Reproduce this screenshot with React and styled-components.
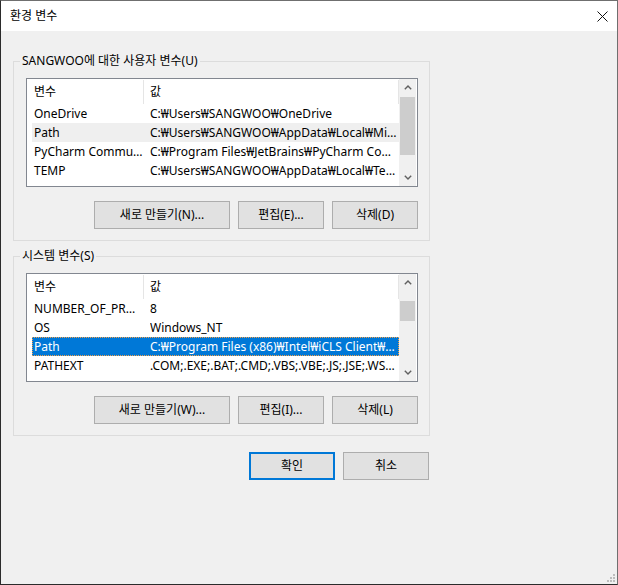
import React from 'react'
import styled, { createGlobalStyle } from 'styled-components'

const Global = createGlobalStyle`
  html, body {
    margin: 0;
    padding: 0;
    background: #f0f0f0;
  }
  body {
    font-family: "Noto Sans", "Noto Sans CJK KR", sans-serif;
    font-size: 12px;
    color: #000;
  }
`;

const Window = styled.div`
  position: relative;
  width: 618px;
  height: 585px;
  box-sizing: border-box;
  border: 1px solid #6f6f6f;
  border-left-color: #2b2b2b;
  border-bottom-color: #2b2b2b;
  background: #f0f0f0;
  display: flex;
  flex-direction: column;
  overflow: hidden;
`;

const TitleBar = styled.div`
  height: 30px;
  background: #fff;
  display: flex;
  align-items: center;
  justify-content: space-between;
  padding: 0 9px 0 9px;
  .title {
    line-height: 16px;
  }
`;

const Body = styled.div`
  padding: 22px 0 0 12px;
  display: flex;
  flex-direction: column;
`;

const Group = styled.fieldset`
  width: 417px;
  box-sizing: border-box;
  min-width: 0;
  margin: ${p => p.$top || 0}px 0 0 0;
  padding: 0;
  border: 1px solid #dcdcdc;
  legend {
    margin-left: 6px;
    padding: 0 2px;
    line-height: 16px;
    font-size: 12px;
  }
`;

const GroupInner = styled.div`
  padding: 9px 11px 11px 12px;
`;

const ListBox = styled.div`
  height: 109px;
  box-sizing: border-box;
  border: 1px solid #828790;
  background: #fff;
  display: flex;
  overflow: hidden;
`;

const ListMain = styled.div`
  width: 372px;
  padding-left: 5px;
  box-sizing: border-box;
  display: flex;
  flex-direction: column;
  overflow: hidden;
`;

const Header = styled.div`
  height: 25px;
  display: flex;
  flex-shrink: 0;
`;

const HeaderCell = styled.div`
  width: ${p => p.$w}px;
  box-sizing: border-box;
  padding-left: ${p => p.$pad}px;
  margin-top: 1px;
  border-right: 1px solid #e5e5e5;
  display: flex;
  align-items: center;
  line-height: 16px;
`;

const Row = styled.div`
  height: 19px;
  width: 367px;
  flex-shrink: 0;
  display: flex;
  align-items: center;
  box-sizing: border-box;
  line-height: 16px;
  background: ${p => (p.$selected ? '#0078d7' : p.$hover ? '#efefef' : 'transparent')};
  color: ${p => (p.$selected ? '#fff' : '#000')};
  outline: ${p => (p.$selected ? '1px dotted #f2a04a' : 'none')};
  outline-offset: -1px;
`;

const Cell = styled.div`
  white-space: nowrap;
  overflow: hidden;
  text-overflow: ellipsis;
  box-sizing: border-box;
  &.name {
    width: 118px;
    padding: 0 6px 0 2px;
  }
  &.value {
    flex: 1;
    padding-right: 2px;
  }
`;

const ScrollBar = styled.div`
  width: 17px;
  margin-right: 1px;
  background: #f0f0f0;
  display: flex;
  flex-direction: column;
`;

const Arrow = styled.div`
  height: 17px;
  flex-shrink: 0;
  display: flex;
  align-items: center;
  justify-content: center;
`;

const Track = styled.div`
  flex: 1;
  padding: 0 1px;
`;

const Thumb = styled.div`
  background: #cdcdcd;
`;

const ButtonRow = styled.div`
  display: flex;
  justify-content: flex-end;
  gap: 8px;
  margin-top: 14px;
`;

const Footer = styled.div`
  width: 417px;
  display: flex;
  justify-content: flex-end;
  gap: 8px;
  margin-top: 16px;
  padding-right: 1px;
  box-sizing: border-box;
`;

const Button = styled.button`
  width: ${p => p.$w || 86}px;
  height: 28px;
  box-sizing: border-box;
  padding: 0;
  background: #e1e1e1;
  border: ${p => (p.$default ? '2px solid #0078d7' : '1px solid #adadad')};
  font-family: "Noto Sans", "Noto Sans CJK KR", sans-serif;
  font-size: 12px;
  line-height: 16px;
  color: #000;
`;

const Grip = styled.svg`
  position: absolute;
  right: 2px;
  bottom: 2px;
`;

function Chevron({ down }) {
  return (
    <svg width="8" height="5" viewBox="0 0 8 5">
      <path
        d={down ? 'M0.8 0.8 L4 4 L7.2 0.8' : 'M0.8 4.2 L4 1 L7.2 4.2'}
        fill="none"
        stroke="#606060"
        strokeWidth="1.4"
      />
    </svg>
  );
}

function VarList({ rows, thumbTop, thumbHeight }) {
  return (
    <ListBox>
      <ListMain>
        <Header>
          <HeaderCell $w={112} $pad={2}>변수</HeaderCell>
          <HeaderCell $w={255} $pad={6}>값</HeaderCell>
        </Header>
        {rows.map(r => (
          <Row key={r.name} $selected={r.selected} $hover={r.hover}>
            <Cell className="name">{r.name}</Cell>
            <Cell className="value">{r.value}</Cell>
          </Row>
        ))}
      </ListMain>
      <ScrollBar>
        <Arrow><Chevron /></Arrow>
        <Track>
          <Thumb style={{ marginTop: thumbTop, height: thumbHeight }} />
        </Track>
        <Arrow><Chevron down /></Arrow>
      </ScrollBar>
    </ListBox>
  );
}

const userVars = [
  { name: 'OneDrive', value: 'C:₩Users₩SANGWOO₩OneDrive' },
  { name: 'Path', value: 'C:₩Users₩SANGWOO₩AppData₩Local₩Microsoft₩WindowsApps;', hover: true },
  { name: 'PyCharm Community Edition', value: 'C:₩Program Files₩JetBrains₩PyCharm Community Edition 2020.3₩bin;' },
  { name: 'TEMP', value: 'C:₩Users₩SANGWOO₩AppData₩Local₩Temp' },
];

const systemVars = [
  { name: 'NUMBER_OF_PROCESSORS', value: '8' },
  { name: 'OS', value: 'Windows_NT' },
  { name: 'Path', value: 'C:₩Program Files (x86)₩Intel₩iCLS Client₩;C:₩Program Files₩Intel₩iCLS Client₩;', selected: true },
  { name: 'PATHEXT', value: '.COM;.EXE;.BAT;.CMD;.VBS;.VBE;.JS;.JSE;.WSF;.WSH;.MSC' },
];

export default function App() {
  return (
    <Window>
      <Global />
      <TitleBar>
        <span className="title">환경 변수</span>
        <svg width="11" height="11" viewBox="0 0 11 11">
          <path d="M0.5 0.5 L10.5 10.5 M10.5 0.5 L0.5 10.5" stroke="#111" strokeWidth="1" />
        </svg>
      </TitleBar>
      <Body>
        <Group>
          <legend>SANGWOO에 대한 사용자 변수(U)</legend>
          <GroupInner>
            <VarList rows={userVars} thumbTop={1} thumbHeight={58} />
            <ButtonRow>
              <Button $w={136}>새로 만들기(N)...</Button>
              <Button>편집(E)...</Button>
              <Button>삭제(D)</Button>
            </ButtonRow>
          </GroupInner>
        </Group>
        <Group $top={7}>
          <legend>시스템 변수(S)</legend>
          <GroupInner>
            <VarList rows={systemVars} thumbTop={10} thumbHeight={20} />
            <ButtonRow>
              <Button $w={136}>새로 만들기(W)...</Button>
              <Button>편집(I)...</Button>
              <Button>삭제(L)</Button>
            </ButtonRow>
          </GroupInner>
        </Group>
        <Footer>
          <Button $default>확인</Button>
          <Button>취소</Button>
        </Footer>
      </Body>
      <Grip width="8" height="8" viewBox="0 0 8 8">
        <g fill="#bdbdbd">
          <rect x="6" y="0" width="2" height="2" />
          <rect x="3" y="3" width="2" height="2" />
          <rect x="6" y="3" width="2" height="2" />
          <rect x="0" y="6" width="2" height="2" />
          <rect x="3" y="6" width="2" height="2" />
          <rect x="6" y="6" width="2" height="2" />
        </g>
      </Grip>
    </Window>
  );
}
